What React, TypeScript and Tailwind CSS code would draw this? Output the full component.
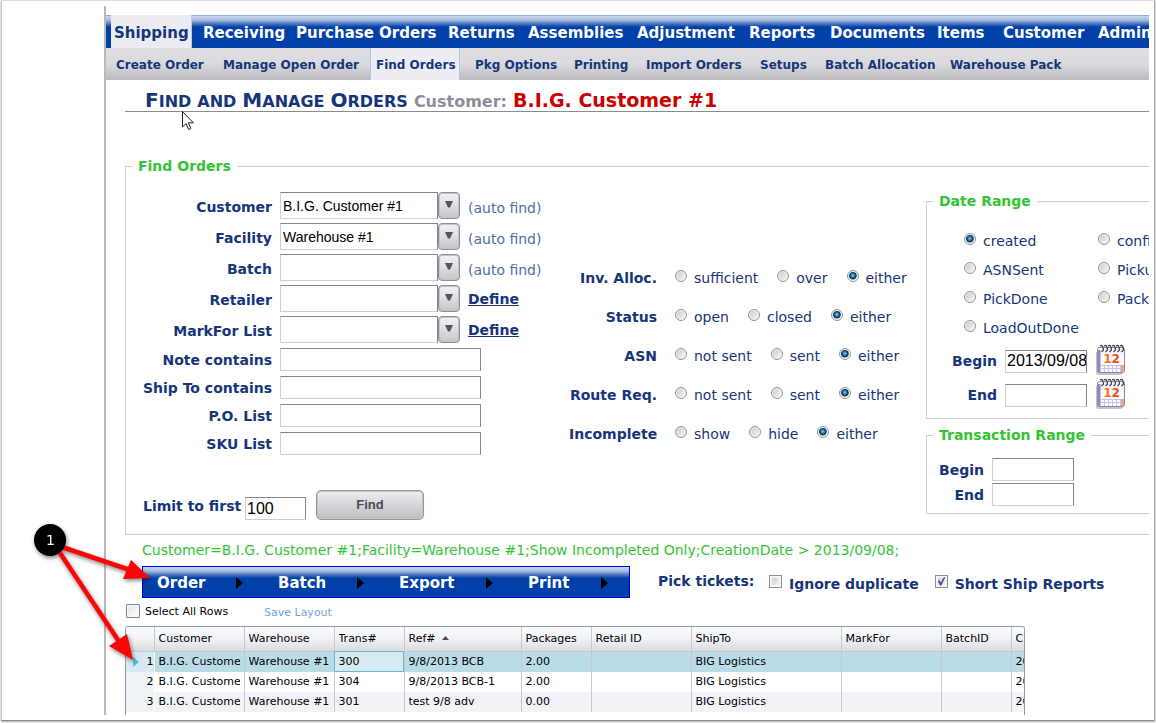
import React, { useState } from 'react';

interface NavItem {
  label: string;
  width: string;
}

interface Column {
  label: string;
  width: string;
  sorted?: boolean;
}

const mainMenu: NavItem[] = [
  { label: 'Receiving', width: 'w-[93px]' },
  { label: 'Purchase Orders', width: 'w-[152px]' },
  { label: 'Returns', width: 'w-[80px]' },
  { label: 'Assemblies', width: 'w-[109px]' },
  { label: 'Adjustment', width: 'w-[112px]' },
  { label: 'Reports', width: 'w-[81px]' },
  { label: 'Documents', width: 'w-[107px]' },
  { label: 'Items', width: 'w-[66px]' },
  { label: 'Customer', width: 'w-[95px]' },
  { label: 'Admin', width: 'w-[80px]' },
];

const subMenuAfter: NavItem[] = [
  { label: 'Pkg Options', width: 'w-[99px]' },
  { label: 'Printing', width: 'w-[72px]' },
  { label: 'Import Orders', width: 'w-[114px]' },
  { label: 'Setups', width: 'w-[65px]' },
  { label: 'Batch Allocation', width: 'w-[125px]' },
  { label: 'Warehouse Pack', width: 'w-[125px]' },
];

const combos = [
  { id: 'customer', label: 'Customer', value: 'B.I.G. Customer #1' },
  { id: 'facility', label: 'Facility', value: 'Warehouse #1' },
  { id: 'batch', label: 'Batch', value: '' },
  { id: 'retailer', label: 'Retailer', value: '', define: true },
  { id: 'markfor', label: 'MarkFor List', value: '', define: true },
];

const textFields = [
  { id: 'note', label: 'Note contains' },
  { id: 'shipto', label: 'Ship To contains' },
  { id: 'po', label: 'P.O. List' },
  { id: 'sku', label: 'SKU List' },
];

const radioRows = [
  { name: 'alloc', label: 'Inv. Alloc.', options: ['sufficient', 'over', 'either'] },
  { name: 'status', label: 'Status', options: ['open', 'closed', 'either'] },
  { name: 'asn', label: 'ASN', options: ['not sent', 'sent', 'either'] },
  { name: 'route', label: 'Route Req.', options: ['not sent', 'sent', 'either'] },
  { name: 'incomplete', label: 'Incomplete', options: ['show', 'hide', 'either'] },
];

const dateTypes = ['created', 'confi', 'ASNSent', 'Picku', 'PickDone', 'Pack', 'LoadOutDone'];

const actions: NavItem[] = [
  { label: 'Order', width: 'w-[121px]' },
  { label: 'Batch', width: 'w-[121px]' },
  { label: 'Export', width: 'w-[129px]' },
  { label: 'Print', width: 'w-[115px]' },
];

const columns: Column[] = [
  { label: 'Customer', width: 'w-[90px]' },
  { label: 'Warehouse', width: 'w-[90px]' },
  { label: 'Trans#', width: 'w-[70px]' },
  { label: 'Ref#', width: 'w-[117px]', sorted: true },
  { label: 'Packages', width: 'w-[70px]' },
  { label: 'Retail ID', width: 'w-[100px]' },
  { label: 'ShipTo', width: 'w-[150px]' },
  { label: 'MarkFor', width: 'w-[100px]' },
  { label: 'BatchID', width: 'w-[70px]' },
  { label: 'C', width: 'w-[15px]' },
];

const rows = [
  ['B.I.G. Customer', 'Warehouse #1', '300', '9/8/2013 BCB', '2.00', '', 'BIG Logistics', '', '', '20'],
  ['B.I.G. Customer', 'Warehouse #1', '304', '9/8/2013 BCB-1', '2.00', '', 'BIG Logistics', '', '', '20'],
  ['B.I.G. Customer', 'Warehouse #1', '301', 'test 9/8 adv', '0.00', '', 'BIG Logistics', '', '', '20'],
];

const inset =
  "border border-t-[#85858f] border-r-[#85858f] border-b-[#cfcfd2] border-l-[#cfcfd2] bg-white text-black outline-none font-['Liberation_Sans',sans-serif]";
const groupBox = 'min-w-0 border border-r-0 border-[#cfcfcf]';
const groupTitle = 'ml-[6px] px-[6px] text-[14px] leading-[20px] font-bold text-[#33c433]';

function Radio({ name, label, checked }: { name: string; label: string; checked?: boolean }) {
  return (
    <label className="flex items-center gap-[7px] whitespace-nowrap">
      <input
        type="radio"
        name={name}
        defaultChecked={checked}
        className="mb-[3px] size-[12px] shrink-0 appearance-none rounded-full border border-[#949494] bg-linear-to-br from-[#c4c7cb] to-[#fafafa] shadow-[inset_0_0_0_1px_#f4f4f4] checked:bg-[radial-gradient(circle_at_48%_45%,#8fdcf8_0,#1f82b8_22%,#0d2f4d_46%,#f4f4f4_60%)]"
      />
      {label}
    </label>
  );
}

function Check({ label, checked }: { label: string; checked?: boolean }) {
  return (
    <label className="flex items-center gap-[7px] whitespace-nowrap">
      <span className="relative mb-[4px] size-[13px]">
        <input
          type="checkbox"
          defaultChecked={checked}
          className="peer block size-[13px] appearance-none border border-[#8e8f8f] bg-linear-to-br from-[#c3c6ca] to-[#fafafa] shadow-[inset_0_0_0_2px_#f4f4f4]"
        />
        <svg viewBox="0 0 13 13" className="pointer-events-none absolute inset-0 hidden size-[13px] peer-checked:block">
          <path d="M2.800 6l1.600-.8L5.700 7.800 9 2l1.200.5L6.300 10.500H5z" fill="#3d4f97" />
        </svg>
      </span>
      {label}
    </label>
  );
}

function CalendarIcon() {
  return (
    <svg width="31" height="31" viewBox="0 0 31 31">
      <defs>
        <linearGradient id="digits" x1="0" x2="1">
          <stop offset="0" stopColor="#f9860f" />
          <stop offset="1" stopColor="#e23c22" />
        </linearGradient>
      </defs>
      <path d="M1 8h27v20q0 3-3 3H4q-4 0-3-4z" fill="#a9a9b0" opacity=".7" />
      <rect x="2.500" y="3.500" width="27" height="25" rx="2" fill="#fbf6fa" stroke="#8785b8" />
      <path d="M2.500 6v20q0 2.500 3 2.500V6z" fill="#8d8bc2" />
      <path d="M26 21h3v7h-3z" fill="#f0a878" />
      <path d="M6 21.500h20M6 24.500h20M9.500 21v7M13.500 21v7M17.500 21v7M21.500 21v7M25.500 21v7" stroke="#c5c3e4" />
      <path
        d="M5 2q3-2 3.500 4l-2 2M9 2q3-2 3.500 4l-2 2M13 2q3-2 3.500 4l-2 2M17 2q3-2 3.500 4l-2 2M21 2q3-2 3.500 4l-2 2M25 2q3-2 3.500 4l-2 2"
        stroke="#45454b"
        strokeWidth="1.300"
        fill="none"
      />
      <text x="16.500" y="19" textAnchor="middle" fontFamily="DejaVu Sans" fontWeight="700" fontSize="12" fill="url(#digits)">
        12
      </text>
    </svg>
  );
}

function DateRow({ id, label, value }: { id: string; label: string; value: string }) {
  return (
    <div className="flex h-[30px] items-center">
      <label htmlFor={id} className="mt-1 mr-2 w-[70px] text-right font-bold">
        {label}
      </label>
      <input id={id} defaultValue={value} className={`${inset} mt-1 h-[23px] w-[82px] pl-[1px] text-[16px]`} />
      <button type="button" aria-label={`Pick ${label} date`} className="ml-2">
        <CalendarIcon />
      </button>
    </div>
  );
}

function FindOrders() {
  return (
    <fieldset className={`${groupBox} mt-[44px] pb-[14px]`}>
      <legend className={groupTitle}>Find Orders</legend>
      <div className="flex">
        {/* left: search fields */}
        <div className="w-[443px] shrink-0 pt-[16px]">
          <div className="flex flex-col gap-1">
            {combos.map((c) => (
              <div key={c.id} className="flex h-[27px] items-center">
                <label htmlFor={c.id} className="mt-[3px] mr-2 w-[146px] text-right font-bold">
                  {c.label}
                </label>
                <div className="relative mr-2">
                  <select id={c.id} defaultValue={c.value} className={`${inset} block h-[27px] w-[180px] appearance-none pl-[2px] text-[14px]`}>
                    <option value={c.value}>{c.value}</option>
                  </select>
                  <span className="pointer-events-none absolute inset-y-0 right-0 flex w-[23px] border-l border-[#85858f] bg-white">
                    <span className="flex flex-1 items-center justify-center rounded-[4px] border border-[#8f8f99] bg-linear-to-b from-[#f3f3f5] via-[#dedee2] to-[#c4c4ca] shadow-[inset_0_0_0_1px_#c2c2c8]">
                      <svg width="8" height="7" viewBox="0 0 8 7" className="mb-[3px]">
                        <path d="M0 0h8L5 6.500H3z" fill="#55555e" />
                      </svg>
                    </span>
                  </span>
                </div>
                {c.define ? (
                  <a href="#define" className="font-bold underline">
                    Define
                  </a>
                ) : (
                  <span className="mt-1 text-[#4c6ea8]">(auto find)</span>
                )}
              </div>
            ))}
          </div>
          <div className="mt-[5px] flex flex-col gap-[5px]">
            {textFields.map((f) => (
              <div key={f.id} className="flex h-[23px] items-center">
                <label htmlFor={f.id} className="mr-2 w-[146px] text-right font-bold">
                  {f.label}
                </label>
                <input id={f.id} className={`${inset} h-[23px] w-[201px] px-1 text-[14px]`} />
              </div>
            ))}
          </div>
          <div className="mt-[35px] flex items-end pl-[17px]">
            <label htmlFor="limit" className="mb-1 w-[102px] whitespace-nowrap font-bold">
              Limit to first
            </label>
            <input id="limit" defaultValue="100" className={`${inset} h-[23px] w-[61px] pl-[1px] text-[16px]`} />
            <button
              type="button"
              className="ml-[10px] h-[30px] w-[108px] rounded-[5px] border border-[#97979f] bg-linear-to-b from-[#ededf0] via-[#d6d6da] to-[#bcbcc2] font-['Liberation_Sans',sans-serif] text-[13px] font-bold text-[#4b4b55] shadow-[inset_0_0_0_1px_#c4c4ca]"
            >
              Find
            </button>
          </div>
        </div>

        {/* middle: status filters */}
        <div className="w-[357px] shrink-0 pt-[82px]">
          {radioRows.map((row) => (
            <div key={row.name} role="radiogroup" aria-label={row.label} className="flex h-[39px] items-center">
              <span className="mr-[18px] w-[88px] text-right font-bold">{row.label}</span>
              <div className="flex gap-[19px]">
                {row.options.map((o) => (
                  <Radio key={o} name={row.name} label={o} checked={o === 'either'} />
                ))}
              </div>
            </div>
          ))}
        </div>

        {/* right: ranges */}
        <div className="min-w-0 flex-1 pt-[15px]">
          <fieldset className={`${groupBox} pb-[10px]`}>
            <legend className={groupTitle}>Date Range</legend>
            <div className="grid auto-rows-[29px] grid-cols-[134px_134px] items-center pt-[15px] pl-[37px]">
              {dateTypes.map((d) => (
                <Radio key={d} name="datetype" label={d} checked={d === 'created'} />
              ))}
            </div>
            <div className="mt-[2px] flex flex-col gap-1">
              <DateRow id="date-begin" label="Begin" value="2013/09/08" />
              <DateRow id="date-end" label="End" value="" />
            </div>
          </fieldset>
          <fieldset className={`${groupBox} mt-[6px] pb-[7px]`}>
            <legend className={groupTitle}>Transaction Range</legend>
            <div className="flex flex-col gap-[2px] pt-[13px]">
              {['Begin', 'End'].map((l) => (
                <div key={l} className="flex items-center">
                  <label htmlFor={`tr-${l}`} className="mr-2 w-[57px] text-right font-bold">
                    {l}
                  </label>
                  <input id={`tr-${l}`} className={`${inset} h-[23px] w-[82px] px-[1px] text-[16px]`} />
                </div>
              ))}
            </div>
          </fieldset>
        </div>
      </div>
    </fieldset>
  );
}

function OrdersTable() {
  const [selected, setSelected] = useState(0);

  return (
    <div className="mt-2 h-[89px] w-[900px] overflow-hidden rounded-t-[3px] border border-b-0 border-[#8f9cab]">
      <table className="w-[900px] table-fixed border-collapse text-[11px] text-black">
        <thead>
          <tr className="h-[24px] bg-linear-to-b from-[#fbfcfd] via-[#f1f2f5] to-[#d9dbe1]">
            <th className="w-[28px] border-r border-b border-[#c5c9ce]" />
            {columns.map((c) => (
              <th
                key={c.label}
                className={`${c.width} border-r border-b border-[#c5c9ce] px-1 text-left font-normal whitespace-nowrap last:border-r-0 last:pr-0`}
              >
                <div className="overflow-hidden">
                  {c.label}
                  {c.sorted && (
                    <svg width="7" height="4" viewBox="0 0 7 4" className="mb-[2px] ml-[6px] inline">
                      <path d="M0 4L3.500 0 7 4z" fill="#4c4c4c" />
                    </svg>
                  )}
                </div>
              </th>
            ))}
          </tr>
        </thead>
        <tbody>
          {rows.map((r, i) => (
            <tr
              key={r[2]}
              onClick={() => setSelected(i)}
              className={`h-[20px] ${i === selected ? 'bg-[#badce8]' : i % 2 === 0 ? 'bg-[#f0f4f9]' : 'bg-white'}`}
            >
              <td className={`border-r border-white p-0 ${i === selected ? 'bg-[#d9e9f1]' : 'bg-[#eff3f7]'}`}>
                <div className="flex items-center justify-end">
                  {i === selected && (
                    <svg width="6" height="10" viewBox="0 0 6 10" className="mr-[8px]">
                      <path d="M0 0l6 5-6 5z" fill="#5bbadb" />
                    </svg>
                  )}
                  {i + 1}
                </div>
              </td>
              {r.map((v, j) => (
                <td
                  key={j}
                  className={`border-r border-[#c5c9ce] py-0 last:border-r-0 ${j === 9 ? 'pr-0 pl-1' : 'px-1'} ${
                    i === selected && j === 2 ? 'bg-[#d6eaf2] outline -outline-offset-1 outline-[#6ab9d3]' : ''
                  }`}
                >
                  <div className="overflow-hidden whitespace-nowrap">{v}</div>
                </td>
              ))}
            </tr>
          ))}
        </tbody>
      </table>
    </div>
  );
}

function Callout() {
  return (
    <svg width="160" height="160" viewBox="0 0 160 160" className="pointer-events-none absolute top-[520px] left-0 drop-shadow-[1px_2px_2px_rgba(0,0,0,0.5)]">
      <path d="M62 27L130 50M58 30L120 123" stroke="#fb0606" strokeWidth="4.500" />
      <path d="M150 58L131 40 123 59zM133 140L127 114 109 126z" fill="#fb0606" />
      <circle cx="50" cy="20" r="16" fill="#000" />
      <text x="50.500" y="25" textAnchor="middle" fontFamily="DejaVu Sans" fontSize="14" fill="#fff">
        1
      </text>
    </svg>
  );
}

export default function App() {
  return (
    <div className="relative min-h-screen overflow-hidden bg-white px-[1px] pb-[2px] font-['Verdana','DejaVu_Sans',sans-serif] text-[14px] leading-[20px] text-[#16357a]">
      <div className="border border-t-[#dedede] border-r-[#a0a0a0] border-b-[#8d8d8d] border-l-[#c4c4c4] pt-[5px] pr-[5px] pb-[5px] pl-[102px] shadow-[0_1px_2px_rgba(0,0,0,0.35)]">
        <div className="overflow-hidden border-l-2 border-[#b9b9b9] pt-[9px]">
          <nav className="flex h-[33px] bg-[linear-gradient(to_bottom,#8fb2dc_0,#8fb2dc_1px,#c8d6ef_1px,#a9bee2_5px,#5f84c6_8px,#0040a8_12px)] pl-[5px] text-[15px] leading-[36px] font-bold text-white">
            <a href="#shipping" className="mr-[11px] w-[81px] shrink-0 border-r border-[#b9c8e6] bg-[#ebecf2] pl-[3px] text-[#16357a]">
              Shipping
            </a>
            {mainMenu.map((m) => (
              <a key={m.label} href="#menu" className={`${m.width} shrink-0 whitespace-nowrap`}>
                {m.label}
              </a>
            ))}
          </nav>
          <nav className="flex h-[32px] bg-linear-to-b from-[#dedee3] via-[#dadade] to-[#babbc0] pl-[10px] text-[12px] leading-[34px] font-bold whitespace-nowrap">
            <a href="#create" className="w-[107px] shrink-0">
              Create Order
            </a>
            <a href="#manage" className="w-[147px] shrink-0">
              Manage Open Order
            </a>
            <a href="#find" className="mr-[15px] h-[32px] w-[90px] shrink-0 border-x border-[#b9c3dd] bg-[#ecedf2] pl-[5px]">
              Find Orders
            </a>
            {subMenuAfter.map((m) => (
              <a key={m.label} href="#submenu" className={`${m.width} shrink-0`}>
                {m.label}
              </a>
            ))}
          </nav>

          <main className="pl-[19px]">
            <h1 className="flex h-[32px] items-baseline gap-[6px] border-b border-[#8b8b8b] pl-[20px] text-[16px] leading-[40px] font-bold whitespace-nowrap">
              <span className="inline-block uppercase first-letter:text-[20px]">Find</span>
              <span className="uppercase">and</span>
              <span className="inline-block uppercase first-letter:text-[20px]">Manage</span>
              <span className="inline-block uppercase first-letter:text-[20px]">Orders</span>
              <span className="text-[#8b8f9b]">Customer:</span>
              <span className="text-[19px] text-[#cc0000]">B.I.G. Customer #1</span>
            </h1>

            <FindOrders />

            <p className="mt-[5px] ml-[17px] whitespace-nowrap text-[#33c433]">
              Customer=B.I.G. Customer #1;Facility=Warehouse #1;Show Incompleted Only;CreationDate &gt; 2013/09/08;
            </p>

            <div className="mt-[6px] ml-[17px] flex whitespace-nowrap">
              <div className="flex h-[32px] border border-[#0000f0] bg-[linear-gradient(to_bottom,#c8d6ef_0,#a9bee2_4px,#5f84c6_7px,#0040a8_11px)]">
                {actions.map((a) => (
                  <button
                    key={a.label}
                    type="button"
                    className={`${a.width} flex items-center justify-between pt-[2px] pr-[21px] pl-[14px] text-[15px] font-bold text-white`}
                  >
                    {a.label}
                    <svg width="8" height="12" viewBox="0 0 8 12">
                      <path d="M1 0l7 6-7 6z" fill="#000" />
                    </svg>
                  </button>
                ))}
              </div>
              <div className="ml-[28px] flex h-[32px] items-center font-bold">
                <span className="mb-[2px] w-[111px]">Pick tickets:</span>
                <div className="mt-[3px] flex gap-[16px]">
                  <Check label="Ignore duplicate" />
                  <Check label="Short Ship Reports" checked />
                </div>
              </div>
            </div>

            <div className="mt-[6px] flex h-[14px] items-center text-[11px]">
              <label className="flex w-[139px] items-center gap-[5px] pl-[1px] text-black">
                <input
                  type="checkbox"
                  className="size-[14px] appearance-none rounded-[1px] border border-[#7b8794] bg-linear-to-br from-[#dfe6ee] to-[#fdfdfe] shadow-[inset_0_0_0_1px_#f7f8fa]"
                />
                <span className="mt-[2px]">Select All Rows</span>
              </label>
              <a href="#save" className="mt-[4px] text-[#6fa5d3]">
                Save Layout
              </a>
            </div>

            <OrdersTable />
          </main>
        </div>
      </div>

      {/* mouse pointer */}
      <svg width="13" height="20" viewBox="0 0 13 20" className="pointer-events-none absolute top-[111px] left-[182px]">
        <path d="M.5.500v15.500l3.600-3.400 2.500 5.900 2.300-1-2.500-5.700h5z" fill="#fff" stroke="#222238" />
      </svg>
      <Callout />
    </div>
  );
}
